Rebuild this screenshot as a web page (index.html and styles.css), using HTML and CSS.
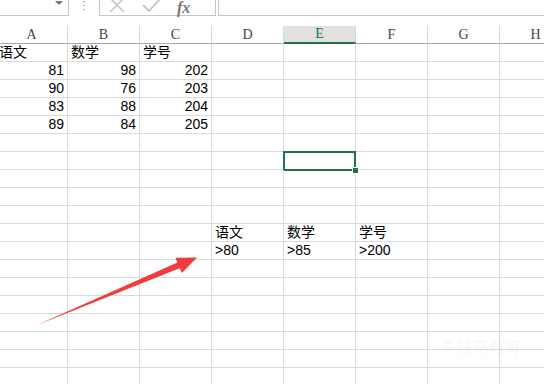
FILE: index.html
```html
<!DOCTYPE html>
<html lang="zh">
<head>
  <meta charset="UTF-8">
  <meta name="viewport" content="width=device-width, initial-scale=1.0">
  <title>高级筛选</title>
  <link rel="stylesheet" href="styles.css">
</head>
<body>
  <div class="toolbar">
    <div class="namebox"><span class="drop"></span></div>
    <div class="dots"><i></i><i></i><i></i></div>
    <div class="fx-buttons">
      <svg class="ico" width="22" height="14" viewBox="0 0 22 14"><path d="M3 -2 L17 12 M17 -2 L3 12" stroke="#c4c4c4" stroke-width="1.6" fill="none"/></svg>
      <svg class="ico" width="22" height="14" viewBox="0 0 22 14"><path d="M2 5 L8 11 L20 -2" stroke="#c4c4c4" stroke-width="1.8" fill="none"/></svg>
      <span class="fx">fx</span>
    </div>
    <div class="formula"></div>
  </div>

  <div class="viewport">
    <div class="sheet" id="sheet"></div>
  </div>

  <svg class="arrow" width="544" height="384" viewBox="0 0 544 384">
    <polygon points="37,325 177.4,262.6 175.5,257.8 197,257.5 181.9,273 179.6,268.2" fill="#f03c3c"/>
  </svg>

  <div class="watermark"><b>S</b> 快马教育</div>

  <script type="text/javascript">
    const cols = ["A", "B", "C", "D", "E", "F", "G", "H"];
    const rows = 19;
    const data = {
      "1": { A: "语文", B: "数学", C: "学号" },
      "2": { A: 81, B: 98, C: 202 },
      "3": { A: 90, B: 76, C: 203 },
      "4": { A: 83, B: 88, C: 204 },
      "5": { A: 89, B: 84, C: 205 },
      "11": { D: "语文", E: "数学", F: "学号" },
      "12": { D: ">80", E: ">85", F: ">200" }
    };
    const active = { row: 7, col: "E" };

    function renderSheet() {
      const sheet = document.getElementById("sheet");

      cols.forEach(c => {
        const th = document.createElement("div");
        th.className = "head" + (c === active.col ? " on" : "");
        th.textContent = c;
        sheet.appendChild(th);
      });

      for (let r = 1; r <= rows; r++) {
        cols.forEach(c => {
          const td = document.createElement("div");
          td.className = "cell";
          const v = data[r] && data[r][c];
          if (v !== undefined) {
            td.textContent = v;
            if (typeof v === "number") td.classList.add("num");
          }
          if (r === active.row && c === active.col) {
            td.classList.add("selected");
            const h = document.createElement("span");
            h.className = "handle";
            td.appendChild(h);
          }
          sheet.appendChild(td);
        });
      }
    }

    renderSheet();
  </script>
</body>
</html>
```

FILE: styles.css
```css
html, body {
  margin: 0;
  padding: 0;
  width: 544px;
  height: 384px;
  overflow: hidden;
  background: #fff;
  position: relative;
}
body {
  font-family: "Liberation Sans", "Noto Sans CJK SC", sans-serif;
  color: #000;
}

/* formula bar strip */
.toolbar {
  display: flex;
  height: 16px;
}
.namebox {
  width: 68px;
  height: 15px;
  border-right: 1px solid #c6c6c6;
  border-bottom: 1px solid #c6c6c6;
  position: relative;
}
.drop {
  position: absolute;
  left: 55px;
  top: 1px;
  border-left: 4px solid transparent;
  border-right: 4px solid transparent;
  border-top: 4px solid #777;
}
.dots {
  width: 30px;
  display: flex;
  flex-direction: column;
  align-items: center;
  gap: 3px;
  padding-top: 1px;
}
.dots i {
  width: 2px;
  height: 1px;
  background: #b0b0b0;
}
.fx-buttons {
  width: 108px;
  height: 15px;
  border-left: 1px solid #c6c6c6;
  border-right: 1px solid #c6c6c6;
  border-bottom: 1px solid #c6c6c6;
  display: flex;
  align-items: flex-start;
  padding-left: 7px;
  gap: 12px;
  box-sizing: content-box;
}
.ico {
  display: block;
}
.fx {
  font-family: "Liberation Serif", serif;
  font-style: italic;
  font-weight: bold;
  font-size: 16px;
  line-height: 15px;
  color: #777;
  margin-left: 2px;
}
.formula {
  flex: 1;
  margin-left: 2px;
  height: 15px;
  border-left: 1px solid #c6c6c6;
  border-bottom: 1px solid #c6c6c6;
}

/* grid */
.viewport {
  margin-top: 10px;
  width: 544px;
  height: 358px;
  overflow: hidden;
}
.sheet {
  display: grid;
  grid-template-columns: repeat(8, 72px);
  grid-auto-rows: 18px;
  margin-left: -4px;
}
.head {
  box-sizing: border-box;
  border-right: 1px solid #d8d8d8;
  border-bottom: 1px solid #a8a8a8;
  display: flex;
  align-items: center;
  justify-content: center;
  font-family: "Liberation Serif", serif;
  font-size: 14px;
  color: #444;
  background: #fff;
}
.head.on {
  background: #e1e1e1;
  border-bottom: 2px solid #217346;
  color: #217346;
}
.cell {
  box-sizing: border-box;
  border-right: 1px solid #dadada;
  border-bottom: 1px solid #dadada;
  padding: 0 3px;
  font-size: 14px;
  line-height: 17px;
  white-space: nowrap;
  display: flex;
  align-items: flex-end;
  position: relative;
}
.cell.num {
  justify-content: flex-end;
}
.cell.selected::after {
  content: "";
  position: absolute;
  left: -1px;
  top: -1px;
  right: -1px;
  bottom: -2px;
  border: 2px solid #217346;
}
.handle {
  position: absolute;
  right: -4px;
  bottom: -5px;
  width: 5px;
  height: 5px;
  background: #217346;
  border: 1px solid #fff;
  z-index: 2;
}

.arrow {
  position: absolute;
  left: 0;
  top: 0;
  pointer-events: none;
}
.watermark {
  position: absolute;
  left: 443px;
  top: 334px;
  font-family: "Noto Sans CJK SC", sans-serif;
  font-size: 16px;
  font-weight: bold;
  color: rgba(0, 0, 0, 0.03);
}
```
